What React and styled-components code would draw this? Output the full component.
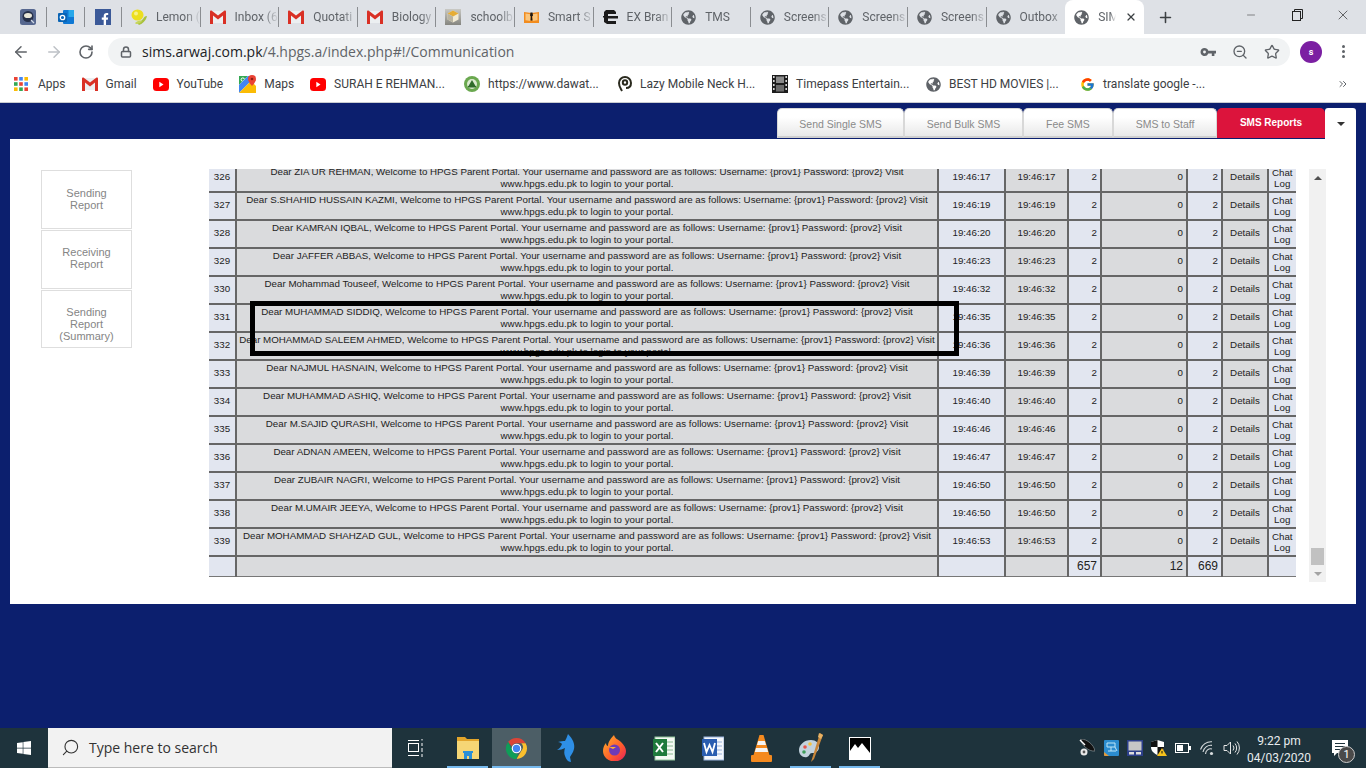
import styled, { createGlobalStyle } from "styled-components";
import { ArrowLeft, ArrowRight, RotateCw, Lock, ZoomOut, Star, Plus, X, Minus, Search, ChevronsRight } from "lucide-react";
import { FaGlobeAmericas, FaFacebookF, FaWindows } from "react-icons/fa";
import { FcGoogle } from "react-icons/fc";

const GlobalStyle = createGlobalStyle`
  html, body { margin: 0; padding: 0; height: 100%; }
  body { font-family: Roboto, "Open Sans", sans-serif; }
  #root { height: 100%; }
  * { box-sizing: border-box; }
`;

const Screen = styled.div`
  width: 1366px;
  height: 768px;
  display: flex;
  flex-direction: column;
  overflow: hidden;
  background: #0c1f6e;
`;

/* browser chrome */
const TabStrip = styled.div`
  height: 34px;
  flex: none;
  display: flex;
  padding-left: 9.5px;
  background: #dee1e6;
`;
const Tab = styled.div`
  position: relative;
  flex: none;
  width: ${(p) => (p.$pinned ? "37.5px" : "78.6px")};
  display: flex;
  align-items: center;
  justify-content: ${(p) => (p.$pinned ? "center" : "flex-start")};
  gap: 9px;
  padding-left: ${(p) => (p.$pinned ? "0" : "9px")};
  font-size: 12px;
  color: #5f6368;
  border-radius: ${(p) => (p.$active ? "8px 8px 0 0" : "0")};
  background: ${(p) => (p.$active ? "#fff" : "transparent")};
  &::after {
    content: "";
    position: absolute;
    right: 0;
    top: 7px;
    height: 20px;
    width: 1px;
    background: ${(p) => (p.$noSep ? "transparent" : "#8a8d91")};
  }
`;
const TabTitle = styled.span`
  flex: 1;
  min-width: 0;
  overflow: hidden;
  white-space: nowrap;
  -webkit-mask-image: linear-gradient(to right, #000 65%, transparent 100%);
  mask-image: linear-gradient(to right, #000 65%, transparent 100%);
`;
const TabClose = styled.span`
  display: flex;
  margin-right: 7px;
  color: #3c4043;
`;
const NewTab = styled.div`
  display: flex;
  align-items: center;
  margin-left: 13px;
  color: #3c4043;
`;
const WindowControls = styled.div`
  margin-left: auto;
  display: flex;
`;
const WindowButton = styled.div`
  width: 46px;
  height: 30px;
  display: flex;
  align-items: center;
  justify-content: center;
  color: #222;
`;

const Toolbar = styled.div`
  height: 34px;
  flex: none;
  display: flex;
  align-items: center;
  background: #fff;
  padding: 1px 0 0 12px;
`;
const NavButton = styled.div`
  width: 33px;
  display: flex;
  color: ${(p) => (p.$off ? "#bdc1c6" : "#5f6368")};
`;
const Omnibox = styled.div`
  width: 1182px;
  height: 28px;
  margin-left: -3px;
  display: flex;
  align-items: center;
  padding: 0 10px 0 12px;
  border-radius: 14px;
  background: #f1f3f4;
  color: #5f6368;
`;
const Url = styled.span`
  margin-left: 10px;
  font: 14px "Open Sans", sans-serif;
  color: #5f6368;
  & > b {
    font-weight: 400;
    color: #202124;
  }
`;
const OmniIcons = styled.div`
  margin-left: auto;
  display: flex;
  gap: 16px;
`;
const Avatar = styled.div`
  width: 22px;
  height: 22px;
  margin-left: 10px;
  border-radius: 50%;
  background: #7b1fa2;
  color: #fff;
  font-size: 9px;
  font-weight: 700;
  display: flex;
  align-items: center;
  justify-content: center;
`;
const MenuDots = styled.div`
  margin-left: 20px;
  display: flex;
  flex-direction: column;
  gap: 2px;
  & > i {
    width: 3px;
    height: 3px;
    border-radius: 50%;
    background: #5f6368;
  }
`;

const BookmarkBar = styled.div`
  height: 35px;
  flex: none;
  display: flex;
  align-items: center;
  padding: 0 0 2px 14px;
  background: #fff;
  border-bottom: 1px solid #c9ccd1;
`;
const Bookmark = styled.div`
  flex: none;
  width: ${(p) => (p.$wide ? "154px" : "auto")};
  margin-right: ${(p) => (p.$wide ? "0" : "16px")};
  display: flex;
  align-items: center;
  gap: 8px;
  font-size: 12px;
  color: #3c4043;
`;
const MoreBookmarks = styled.div`
  margin-left: auto;
  margin-right: 17px;
  display: flex;
  color: #5f6368;
`;

/* page */
const Page = styled.main`
  flex: 1;
  min-height: 0;
  background: #0c1f6e;
  padding: 5px 10px 0;
`;
const NavTabs = styled.nav`
  height: 31px;
  display: flex;
  justify-content: flex-end;
`;
const NavTab = styled.div`
  width: ${(p) => p.$w}px;
  height: 30px;
  display: flex;
  align-items: center;
  justify-content: center;
  padding-top: ${(p) => (p.$active ? "0" : "2px")};
  font: ${(p) => (p.$active ? "700 10px" : "10.5px")} "Liberation Sans", Arial, sans-serif;
  color: ${(p) => (p.$active ? "#fff" : "#8a8a8a")};
  border-radius: 5px 5px 0 0;
  border: ${(p) => (p.$active ? "none" : "1px solid #d8d8d8")};
  background: ${(p) => (p.$active ? "#dc143c" : "linear-gradient(#fff 30%, #e9e9e9)")};
  border-bottom: 2px solid ${(p) => (p.$active ? "#dc143c" : "#cfcfcf")};
`;
const NavCaret = styled.div`
  width: 31px;
  height: 31px;
  display: flex;
  align-items: center;
  justify-content: center;
  background: #fff;
  border-radius: 3px 3px 0 0;
  &::before {
    content: "";
    border: 4px solid transparent;
    border-top: 4px solid #333;
    border-bottom: none;
  }
`;
const Panel = styled.section`
  height: 465px;
  display: flex;
  align-items: flex-start;
  padding: 30px 30px 0 31px;
  background: #fff;
`;
const Sidebar = styled.aside`
  width: 91px;
  flex: none;
  display: flex;
  flex-direction: column;
  gap: 1px;
  margin: 1px 77px 0 0;
`;
const SideLink = styled.div`
  height: ${(p) => p.$h}px;
  padding-top: ${(p) => p.$pad}px;
  text-align: center;
  font: 11px/12px "Liberation Sans", Arial, sans-serif;
  color: #858585;
  border: 1px solid #dedede;
`;
const TableClip = styled.div`
  position: relative;
  width: 1087px;
  height: 408px;
  flex: none;
  overflow: hidden;
`;
const Table = styled.table`
  width: 1087px;
  margin-top: -6px;
  table-layout: fixed;
  border-collapse: collapse;
  font: 9.75px/11.5px "Liberation Sans", Arial, sans-serif;
  color: #222;
`;
const Cell = styled.td`
  height: 28px;
  padding: ${(p) => (p.$top ? "1px 0 0" : p.$chat ? "0 1px" : "0 3px 3px")};
  border: 2px solid #666;
  text-align: ${(p) => p.$align || "center"};
  vertical-align: ${(p) => (p.$top ? "top" : "middle")};
  background: ${(p) => (p.$light ? "#e2e6f0" : "#dadbdd")};
  overflow: hidden;
  &:first-child { border-left: none; }
  &:last-child { border-right: 1px solid #777; }
`;
const TotalCell = styled(Cell)`
  height: 20px;
  padding: 0 3px;
  font-size: 12px;
  line-height: 14px;
  border-bottom: 1px solid #777;
`;
const Highlight = styled.div`
  position: absolute;
  left: 41px;
  top: 132px;
  width: 709px;
  height: 55px;
  border: 5px solid #000;
`;
const ScrollTrack = styled.div`
  width: 17px;
  height: 413px;
  margin-left: 13px;
  flex: none;
  display: flex;
  flex-direction: column;
  justify-content: space-between;
  align-items: center;
  padding: 0 2px;
  background: #f1f1f1;
`;
const ScrollEnd = styled.div`
  height: 17px;
  display: flex;
  align-items: center;
  &::before {
    content: "";
    border: 4px solid transparent;
    ${(p) => (p.$down
      ? "border-top: 4px solid #a3a3a3; border-bottom: none;"
      : "border-bottom: 4px solid #505050; border-top: none;")}
  }
`;
const ScrollLower = styled.div`
  width: 100%;
  display: flex;
  flex-direction: column;
  align-items: center;
`;
const ScrollThumb = styled.div`
  width: 13px;
  height: 17px;
  background: #c1c1c1;
`;

/* windows taskbar */
const Taskbar = styled.footer`
  height: 40px;
  flex: none;
  display: flex;
  align-items: stretch;
  background: #1e333c;
  color: #fff;
`;
const StartButton = styled.div`
  width: 48px;
  display: flex;
  align-items: center;
  justify-content: center;
`;
const SearchBox = styled.div`
  width: 344px;
  display: flex;
  align-items: center;
  gap: 9px;
  padding-left: 13px;
  background: #f2f2f2;
  border-bottom: 1px solid #bbb;
  color: #333;
  font: 14px "Open Sans", sans-serif;
`;
const SearchGlass = styled(Search)`
  transform: scaleX(-1);
`;
const TaskView = styled.div`
  width: 51px;
  display: flex;
  align-items: center;
  justify-content: center;
  padding-right: 3px;
`;
const TaskItem = styled.div`
  position: relative;
  width: 49px;
  display: flex;
  align-items: center;
  justify-content: center;
  background: ${(p) => (p.$active ? "#4c5e66" : "transparent")};
  &::after {
    content: "";
    position: absolute;
    bottom: 0;
    height: 2px;
    left: ${(p) => (p.$active ? "0" : "4px")};
    right: ${(p) => (p.$active ? "0" : "4px")};
    background: ${(p) => (p.$running || p.$active ? "#76b9ed" : "transparent")};
  }
`;
const Tray = styled.div`
  margin-left: auto;
  display: flex;
  align-items: stretch;
`;
const TrayIcon = styled.div`
  width: 24px;
  display: flex;
  align-items: center;
  justify-content: center;
`;
const Clock = styled.div`
  width: 70px;
  padding: 2px 0 0 2px;
  display: flex;
  flex-direction: column;
  justify-content: center;
  align-items: center;
  gap: 3px;
  font-size: 12px;
  line-height: 14px;
  color: #e8ecee;
`;
const Notify = styled.div`
  position: relative;
  width: 53px;
  display: flex;
  align-items: center;
  justify-content: center;
`;
const NotifyBadge = styled.span`
  position: absolute;
  left: 25px;
  top: 18px;
  width: 17px;
  height: 17px;
  border-radius: 50%;
  background: #4a4a4a;
  border: 1px solid #ccc;
  font-size: 11px;
  line-height: 15px;
  text-align: center;
`;

/* icons */
const Globe = () => <FaGlobeAmericas size={15} color="#5f6368" />;

const GmailIcon = () => (
  <svg width="16" height="14" viewBox="0 0 16 14">
    <path d="M2 1h12v12H2z" fill="#eceff1" />
    <path d="M0 1.5C0 .6 1 .1 1.8.7L8 5.5 14.2.7c.8-.6 1.8-.1 1.8.8V14h-3V5.6L8 9.4 3 5.6V14H0z" fill="#d93025" />
  </svg>
);
const OwlIcon = () => (
  <svg width="16" height="16" viewBox="0 0 16 16">
    <rect width="16" height="16" rx="2.5" fill="#56678f" />
    <circle cx="8" cy="7.5" r="5.5" fill="#26304a" />
    <ellipse cx="8" cy="6.5" rx="4" ry="2.6" fill="#e8e6d8" />
    <path d="M11 11l3 3" stroke="#cfd8e4" strokeWidth="1.2" />
  </svg>
);
const OutlookIcon = () => (
  <svg width="16" height="16" viewBox="0 0 16 16">
    <rect x="5" y="1" width="11" height="14" rx="1" fill="#0f78d4" />
    <rect x="10.5" y="1" width="5.5" height="7" fill="#28a8ea" />
    <rect x="0" y="4" width="9" height="9" rx="1" fill="#0a64b4" />
    <circle cx="4.5" cy="8.5" r="2.2" fill="none" stroke="#fff" strokeWidth="1.3" />
  </svg>
);
const FacebookTile = styled.span`
  width: 16px;
  height: 16px;
  display: flex;
  align-items: flex-end;
  justify-content: flex-end;
  background: #3b5998;
  color: #fff;
`;
const FacebookIcon = () => (
  <FacebookTile><FaFacebookF size={12} /></FacebookTile>
);
const LemonIcon = () => (
  <svg width="16" height="16" viewBox="0 0 16 16">
    <path d="M8 16c3-1 7-4 8-9-2 0-3 1-4 3l-2 2-4 2z" fill="#a9c23f" />
    <path d="M5 15c2 0 5-1 6-3-2-1-5 0-7 2z" fill="#c6d65a" />
    <ellipse cx="6.5" cy="6" rx="6" ry="5.6" fill="#ecdf1f" />
    <circle cx="5" cy="4.5" r="2" fill="#f8f28a" />
  </svg>
);
const SchoolIcon = () => (
  <svg width="16" height="16" viewBox="0 0 16 16">
    <defs>
      <linearGradient id="school" x1="0" y1="0" x2="0" y2="1">
        <stop offset="0" stopColor="#c9c9c4" />
        <stop offset="1" stopColor="#85857f" />
      </linearGradient>
    </defs>
    <rect width="16" height="16" fill="url(#school)" />
    <path d="M8 1.5l5.5 3v6L8 13.5l-5.5-3v-6z" fill="#f1ead4" />
    <path d="M8 1.5l5.5 3L8 7.5l-5.5-3z" fill="#e6ad35" />
    <path d="M8 7.5v6l-5.5-3v-6z" fill="#b9b4a2" />
  </svg>
);
const SmartIcon = () => (
  <svg width="15" height="12" viewBox="0 0 15 12">
    <path d="M0 1l7.5 1L15 1v11H0z" fill="#f28c1e" />
    <path d="M1.5 2.5l5 .7V10l-5-.7zM13.5 2.5l-5 .7V10l5-.7z" fill="#fbc67d" />
    <path d="M6.5 1.5h2l.5 3-1 1 .5 4h-2l.3-4-.8-1z" fill="#1f1a14" />
  </svg>
);
const ExIcon = () => (
  <svg width="15" height="16" viewBox="0 0 15 16">
    <path d="M3 1h8l2 2v2H5v2h10v2.4H5V12h8v3H4l-3-2V8.5H0V7h1V3z" fill="#1b1b1b" />
  </svg>
);
const AppsGrid = styled.svg`
  margin-right: 2px;
`;
const AppsIcon = () => {
  const colors = ["#ea4335", "#4285f4", "#fbbc05", "#34a853", "#ea4335", "#4285f4", "#fbbc05", "#34a853", "#ea4335"];
  return (
    <AppsGrid width="14" height="14" viewBox="0 0 14 14">
      {colors.map((c, i) => (
        <rect key={i} x={(i % 3) * 5.2} y={Math.floor(i / 3) * 5.2} width="3.6" height="3.6" fill={c} />
      ))}
    </AppsGrid>
  );
};
const YoutubeIcon = () => (
  <svg width="16" height="13" viewBox="0 0 16 13">
    <rect width="16" height="13" rx="3.5" fill="#f00" />
    <path d="M6.3 3.8l4.2 2.7-4.2 2.7z" fill="#fff" />
  </svg>
);
const MapsIcon = () => (
  <svg width="17" height="18" viewBox="0 0 17 18">
    <path d="M0 1h9L0 10z" fill="#34a853" />
    <circle cx="3.8" cy="4.6" r="1.7" fill="none" stroke="#fff" />
    <path d="M0 10L9 1h3v5L0 18z" fill="#4285f4" />
    <path d="M0 18L12 6l5 5v7z" fill="#fbbc05" />
    <path d="M13 0a4 4 0 0 1 4 4c0 3-4 7-4 7s-4-4-4-7a4 4 0 0 1 4-4z" fill="#ea4335" />
    <circle cx="13" cy="4" r="1.3" fill="#8f1d13" />
  </svg>
);
const DawatIcon = () => (
  <svg width="16" height="16" viewBox="0 0 16 16">
    <circle cx="8" cy="8" r="8" fill="#6aa84f" />
    <circle cx="8" cy="8" r="5" fill="#dcead0" />
    <path d="M8 4l3.5 6h-7z" fill="#2f6b2a" />
    <rect x="4" y="10" width="8" height="1.5" fill="#2f6b2a" />
  </svg>
);
const LazyIcon = () => (
  <svg width="14" height="16" viewBox="0 0 14 16" fill="none" stroke="#2a2a1e" strokeWidth="2">
    <path d="M4 15c-1-2-3-4-3-8a6 6 0 0 1 12 0c0 4-3 5-5 5" />
    <circle cx="7" cy="6.5" r="2.2" />
  </svg>
);
const FilmIcon = () => (
  <svg width="16" height="18" viewBox="0 0 16 18">
    <rect width="16" height="18" fill="#1d1d1d" />
    <rect x="4" y="1.5" width="8" height="6.5" fill="#8a8a8a" />
    <rect x="4" y="10" width="8" height="6.5" fill="#6c6c6c" />
    {[1, 5, 9, 13].map((y) => (
      <g key={y} fill="#d8d8d8">
        <rect x="1" y={y} width="1.6" height="2" />
        <rect x="13.4" y={y} width="1.6" height="2" />
      </g>
    ))}
  </svg>
);
const KeyIcon = () => (
  <svg width="16" height="16" viewBox="0 0 16 16" fill="#5f6368">
    <path d="M4.5 4a4 4 0 0 1 3.8 2.8H16v2.6h-1.6V12h-2.6V9.4H8.3A4 4 0 1 1 4.5 4zm0 2.6a1.4 1.4 0 1 0 0 2.9 1.4 1.4 0 0 0 0-2.9z" />
  </svg>
);
const RestoreIcon = () => (
  <svg width="11" height="12" viewBox="0 0 11 12" fill="none" stroke="#222">
    <rect x=".5" y="2.5" width="8" height="9" />
    <path d="M2.5 2.5v-2h8v9h-2" />
  </svg>
);
const TaskViewIcon = () => (
  <svg width="16" height="18" viewBox="0 0 16 18" fill="none" stroke="#fff">
    <rect x=".5" y="4.5" width="10" height="8" />
    <path d="M0 1.5h11M0 16.5h11M14 0v1.5M14 4v3M14 9v4M14 15v3" />
  </svg>
);
const ExplorerIcon = () => (
  <svg width="22" height="24" viewBox="0 0 22 24">
    <path d="M0 1h8l2 2h12v4H0z" fill="#e3a52b" />
    <rect y="5" width="22" height="18" fill="#f6d675" />
    <path d="M7 23v-6h8v6h-3v-3h-2v3z" fill="#2a8fd8" />
    <rect x="6" y="15" width="10" height="2" fill="#2a8fd8" />
  </svg>
);
const ChromeIcon = () => (
  <svg width="23" height="23" viewBox="0 0 24 24">
    <path d="M12 1a11 11 0 0 1 9.5 5.5H12a5.5 5.5 0 0 0-5 3.2L3.3 5.2A11 11 0 0 1 12 1z" fill="#db4437" />
    <path d="M21.5 6.5A11 11 0 0 1 12 23l4.8-8.2a5.5 5.5 0 0 0 .2-8.3z" fill="#fbc02d" />
    <path d="M12 23A11 11 0 0 1 3.3 5.2L7.8 14a5.5 5.5 0 0 0 5.8 3.3z" fill="#0f9d58" />
    <circle cx="12" cy="12" r="5" fill="#fff" />
    <circle cx="12" cy="12" r="3.8" fill="#4285f4" />
  </svg>
);
const DolphinIcon = () => (
  <svg width="20" height="30" viewBox="0 0 20 30">
    <path d="M12 1c5 5 7 10 6 15-1 4-3 6-4 8l1 5c-3 0-5-3-6-6-1-2-1-5 0-8-2 1-5 2-8 2 2-1 4-3 5-6-1-1-2-2-4-2 3-1 5-1 7-1 1-2 2-4 3-7z" fill="#2e8fe6" />
  </svg>
);
const FirefoxIcon = () => (
  <svg width="23" height="26" viewBox="0 0 23 26">
    <defs>
      <linearGradient id="ff" x1="0" y1="0" x2="1" y2="1">
        <stop offset="0" stopColor="#ffb52b" />
        <stop offset=".6" stopColor="#ff5a2c" />
        <stop offset="1" stopColor="#e4205f" />
      </linearGradient>
    </defs>
    <path d="M11 0c1 4 4 4 7 7 3 3 5 6 5 9a11 10 0 0 1-23 0c0-3 1-6 3-8 0 2 1 3 2 3 0-4 3-8 6-11z" fill="url(#ff)" />
    <circle cx="11.5" cy="15" r="5.5" fill="#6d3bb8" />
    <path d="M6 12h7l-3 2z" fill="#ffb52b" />
  </svg>
);
const ExcelIcon = () => (
  <svg width="22" height="25" viewBox="0 0 22 25">
    <rect x="2" y="1" width="20" height="23" fill="#f4f9f4" stroke="#8fc39a" />
    <path d="M11 6h9M11 10h9M11 14h9M11 18h9" stroke="#8ab892" />
    <rect y="3" width="14" height="17" fill="#1f7a3c" />
    <path d="M3 7l7 9M10 7l-7 9" stroke="#fff" strokeWidth="2" />
  </svg>
);
const WordIcon = () => (
  <svg width="22" height="25" viewBox="0 0 22 25">
    <rect x="2" y="1" width="20" height="23" fill="#f4f7fc" stroke="#9ab4dd" />
    <path d="M11 6h9M11 10h9M11 14h9M11 18h9" stroke="#97b0d8" />
    <rect y="3" width="15" height="17" fill="#2a5db0" />
    <path d="M2 7l2.5 9L7.5 9l3 7L13 7" stroke="#fff" strokeWidth="1.8" fill="none" />
  </svg>
);
const VlcIcon = () => (
  <svg width="21" height="27" viewBox="0 0 21 27">
    <path d="M8.5 0h4l6 20h-16z" fill="#f58a1f" />
    <path d="M7.2 6h6.6l1.2 4H6zM5 13h11l1.2 4H3.8z" fill="#f4f4f4" />
    <rect y="20" width="21" height="7" rx="1" fill="#f58a1f" />
  </svg>
);
const PaletteIcon = () => (
  <svg width="24" height="30" viewBox="0 0 24 30">
    <path d="M12 7C5 7 0 12 0 17c0 5 4 8 8 7 3-1 2-4 5-4 4 0 7-2 7-6s-3-7-8-7z" fill="#c3d3de" />
    <circle cx="6" cy="14" r="1.8" fill="#e8544a" />
    <circle cx="11" cy="11" r="1.8" fill="#f5c33b" />
    <circle cx="5" cy="19" r="1.8" fill="#3e9e5b" />
    <path d="M21 0l3 2-9 24-3 3z" fill="#c9873b" />
    <path d="M20 0l4 2-2 4-3-2z" fill="#e8b264" />
  </svg>
);
const PhotosIcon = () => (
  <svg width="22" height="23" viewBox="0 0 22 23">
    <rect x=".5" y=".5" width="21" height="22" fill="#000" stroke="#fff" />
    <path d="M1 22V14l5-7 3 4 4-5 8 10v6z" fill="#fff" />
  </svg>
);
const SatelliteIcon = () => (
  <svg width="16" height="18" viewBox="0 0 16 18">
    <path d="M2 0c6 0 13 6 14 12-6 1-14-6-14-12z" fill="#111" stroke="#9aa4a8" strokeWidth=".6" />
    <path d="M1 1l5 5" stroke="#fff" strokeWidth="1.4" />
    <circle cx="5" cy="13" r="3.5" fill="#e8e8e8" />
    <circle cx="5" cy="13" r="1.4" fill="#555" />
  </svg>
);
const NetworkIcon = () => (
  <svg width="15" height="16" viewBox="0 0 15 16">
    <rect width="15" height="16" rx="1" fill="#2b8ccf" />
    <path d="M0 12l5 4H1a1 1 0 0 1-1-1z" fill="#e39a3a" />
    <path d="M3 3h8v4H3zM7 7v4M4 11h8M11 7l2 4" fill="none" stroke="#bfe6f7" />
  </svg>
);
const MonitorIcon = () => (
  <svg width="16" height="16" viewBox="0 0 16 16">
    <rect width="16" height="16" fill="#2c3f8a" />
    <rect x="1.5" y="1.5" width="13" height="9" fill="#c6c6c6" />
    <path d="M2 12h5v2.5H2zM9 12h5v2.5H9z" fill="#ddd" />
  </svg>
);
const ShieldIcon = () => (
  <svg width="16" height="16" viewBox="0 0 16 16">
    <path d="M6.5 0L0 2v5c0 4 3 6.5 6.5 8 3.5-1.5 6.5-4 6.5-8V2z" fill="#fff" />
    <path d="M6.5 0v7H0v-5zM6.5 7H13c0 4-3 6.5-6.5 8z" fill="#111" />
    <path d="M11 8l5 8H6z" fill="#f6c21c" />
    <path d="M11 11v2.5" stroke="#111" />
  </svg>
);
const BatteryIcon = () => (
  <svg width="16" height="10" viewBox="0 0 16 10" fill="none">
    <rect x=".5" y=".5" width="13" height="9" stroke="#fff" />
    <rect x="2" y="2" width="6" height="6" fill="#fff" />
    <rect x="14" y="3" width="2" height="4" fill="#fff" />
  </svg>
);
const WifiIcon = () => (
  <svg width="15" height="15" viewBox="0 0 15 15" fill="none" stroke="#d8dcde" strokeWidth="1.1">
    <path d="M.5 8.5A11 11 0 0 1 12 .8M3 11a8 8 0 0 1 9-6.6M5.6 13a5 5 0 0 1 6.4-5" />
    <circle cx="11.5" cy="12.5" r="1.6" fill="#d8dcde" stroke="none" />
  </svg>
);
const VolumeIcon = () => (
  <svg width="17" height="16" viewBox="0 0 17 16" fill="none" stroke="#e6e6e6">
    <path d="M1 5.5h3L7.5 2v12L4 10.5H1z" />
    <path d="M10 5.5a4 4 0 0 1 0 5M12 3.5a7 7 0 0 1 0 9M14 1.5a10 10 0 0 1 0 13" />
  </svg>
);
const NotifyIcon = () => (
  <svg width="16" height="16" viewBox="0 0 16 16">
    <path d="M0 0h16v13H5l-3 3v-3H0z" fill="#fff" />
    <path d="M3 3.5h10M3 6.5h10M3 9.5h7" stroke="#1e333c" />
  </svg>
);

/* data */
const browserTabs = [
  { title: "Lemon (", icon: <LemonIcon /> },
  { title: "Inbox (6", icon: <GmailIcon /> },
  { title: "Quotati", icon: <GmailIcon /> },
  { title: "Biology", icon: <GmailIcon /> },
  { title: "schoolb", icon: <SchoolIcon /> },
  { title: "Smart S", icon: <SmartIcon /> },
  { title: "EX Bran", icon: <ExIcon /> },
  { title: "TMS", icon: <Globe /> },
  { title: "Screens", icon: <Globe /> },
  { title: "Screens", icon: <Globe /> },
  { title: "Screens", icon: <Globe /> },
];

const bookmarks = [
  { label: "Apps", icon: <AppsIcon /> },
  { label: "Gmail", icon: <GmailIcon /> },
  { label: "YouTube", icon: <YoutubeIcon /> },
  { label: "Maps", icon: <MapsIcon /> },
  { label: "SURAH E REHMAN...", icon: <YoutubeIcon />, wide: true },
  { label: "https://www.dawat...", icon: <DawatIcon />, wide: true },
  { label: "Lazy Mobile Neck H...", icon: <LazyIcon />, wide: true },
  { label: "Timepass Entertain...", icon: <FilmIcon />, wide: true },
  { label: "BEST HD MOVIES |...", icon: <Globe />, wide: true },
  { label: "translate google -...", icon: <FcGoogle size={15} />, wide: true },
];

const navTabs = [
  { label: "Send Single SMS", w: 127 },
  { label: "Send Bulk SMS", w: 119 },
  { label: "Fee SMS", w: 90 },
  { label: "SMS to Staff", w: 104 },
  { label: "SMS Reports", w: 108, active: true },
];

const rows = [
  [326, "ZIA UR REHMAN", "17"],
  [327, "S.SHAHID HUSSAIN KAZMI", "19"],
  [328, "KAMRAN IQBAL", "20"],
  [329, "JAFFER ABBAS", "23"],
  [330, "Mohammad Touseef", "32"],
  [331, "MUHAMMAD SIDDIQ", "35"],
  [332, "MOHAMMAD SALEEM AHMED", "36"],
  [333, "NAJMUL HASNAIN", "39"],
  [334, "MUHAMMAD ASHIQ", "40"],
  [335, "M.SAJID QURASHI", "46"],
  [336, "ADNAN AMEEN", "47"],
  [337, "ZUBAIR NAGRI", "50"],
  [338, "M.UMAIR JEEYA", "50"],
  [339, "MOHAMMAD SHAHZAD GUL", "53"],
];

const colWidths = [27, 702, 67, 63, 33, 86, 35, 46, 28];

const App = () => {
  return (
    <Screen>
      <GlobalStyle />
      <TabStrip>
        <Tab $pinned><OwlIcon /></Tab>
        <Tab $pinned><OutlookIcon /></Tab>
        <Tab $pinned><FacebookIcon /></Tab>
        {browserTabs.map((t, i) => (
          <Tab key={i}>
            {t.icon}
            <TabTitle>{t.title}</TabTitle>
          </Tab>
        ))}
        <Tab $noSep>
          <Globe />
          <TabTitle>Outbox</TabTitle>
        </Tab>
        <Tab $active $noSep>
          <Globe />
          <TabTitle>SIMS</TabTitle>
          <TabClose><X size={12} strokeWidth={2.5} /></TabClose>
        </Tab>
        <NewTab><Plus size={17} strokeWidth={2.2} /></NewTab>
        <WindowControls>
          <WindowButton><Minus size={12} strokeWidth={1} /></WindowButton>
          <WindowButton><RestoreIcon /></WindowButton>
          <WindowButton><X size={16} strokeWidth={1} /></WindowButton>
        </WindowControls>
      </TabStrip>

      <Toolbar>
        <NavButton><ArrowLeft size={18} /></NavButton>
        <NavButton $off><ArrowRight size={18} /></NavButton>
        <NavButton><RotateCw size={16} strokeWidth={2.4} /></NavButton>
        <Omnibox>
          <Lock size={12} strokeWidth={3} />
          <Url><b>sims.arwaj.com.pk</b>/4.hpgs.a/index.php#!/Communication</Url>
          <OmniIcons>
            <KeyIcon />
            <ZoomOut size={16} />
            <Star size={16} />
          </OmniIcons>
        </Omnibox>
        <Avatar>s</Avatar>
        <MenuDots><i /><i /><i /></MenuDots>
      </Toolbar>

      <BookmarkBar>
        {bookmarks.map((b) => (
          <Bookmark key={b.label} $wide={b.wide}>
            {b.icon}
            <span>{b.label}</span>
          </Bookmark>
        ))}
        <MoreBookmarks><ChevronsRight size={12} /></MoreBookmarks>
      </BookmarkBar>

      <Page>
        <NavTabs>
          {navTabs.map((t) => (
            <NavTab key={t.label} $w={t.w} $active={t.active}>{t.label}</NavTab>
          ))}
          <NavCaret />
        </NavTabs>
        <Panel>
          <Sidebar>
            <SideLink $h={59} $pad={16}>Sending<br />Report</SideLink>
            <SideLink $h={59} $pad={15}>Receiving<br />Report</SideLink>
            <SideLink $h={58} $pad={15}>Sending<br />Report<br />(Summary)</SideLink>
          </Sidebar>
          <TableClip>
            <Table>
              <colgroup>
                {colWidths.map((w, i) => <col key={i} width={w} />)}
              </colgroup>
              <tbody>
                {rows.map(([num, name, sec]) => (
                  <tr key={num}>
                    <Cell $light>{num}</Cell>
                    <Cell $top>
                      Dear {name}, Welcome to HPGS Parent Portal. Your username and password are as follows: Username: {"{prov1}"} Password: {"{prov2}"} Visit www.hpgs.edu.pk to login to your portal.
                    </Cell>
                    <Cell $light>19:46:{sec}</Cell>
                    <Cell>19:46:{sec}</Cell>
                    <Cell $light $align="right">2</Cell>
                    <Cell $align="right">0</Cell>
                    <Cell $light $align="right">2</Cell>
                    <Cell>Details</Cell>
                    <Cell $light $chat>Chat Log</Cell>
                  </tr>
                ))}
                <tr>
                  <TotalCell $light />
                  <TotalCell />
                  <TotalCell $light />
                  <TotalCell />
                  <TotalCell $light $align="right">657</TotalCell>
                  <TotalCell $align="right">12</TotalCell>
                  <TotalCell $light $align="right">669</TotalCell>
                  <TotalCell />
                  <TotalCell $light />
                </tr>
              </tbody>
            </Table>
            <Highlight />
          </TableClip>
          <ScrollTrack>
            <ScrollEnd />
            <ScrollLower>
              <ScrollThumb />
              <ScrollEnd $down />
            </ScrollLower>
          </ScrollTrack>
        </Panel>
      </Page>

      <Taskbar>
        <StartButton><FaWindows size={16} /></StartButton>
        <SearchBox>
          <SearchGlass size={19} strokeWidth={1.4} />
          Type here to search
        </SearchBox>
        <TaskView><TaskViewIcon /></TaskView>
        <TaskItem $running><ExplorerIcon /></TaskItem>
        <TaskItem $active><ChromeIcon /></TaskItem>
        <TaskItem><DolphinIcon /></TaskItem>
        <TaskItem><FirefoxIcon /></TaskItem>
        <TaskItem><ExcelIcon /></TaskItem>
        <TaskItem><WordIcon /></TaskItem>
        <TaskItem><VlcIcon /></TaskItem>
        <TaskItem $running><PaletteIcon /></TaskItem>
        <TaskItem $running><PhotosIcon /></TaskItem>
        <Tray>
          <TrayIcon><SatelliteIcon /></TrayIcon>
          <TrayIcon><NetworkIcon /></TrayIcon>
          <TrayIcon><MonitorIcon /></TrayIcon>
          <TrayIcon><ShieldIcon /></TrayIcon>
          <TrayIcon><BatteryIcon /></TrayIcon>
          <TrayIcon><WifiIcon /></TrayIcon>
          <TrayIcon><VolumeIcon /></TrayIcon>
          <Clock>
            <span>9:22 pm</span>
            <span>04/03/2020</span>
          </Clock>
          <Notify>
            <NotifyIcon />
            <NotifyBadge>1</NotifyBadge>
          </Notify>
        </Tray>
      </Taskbar>
    </Screen>
  );
};

export default App;
